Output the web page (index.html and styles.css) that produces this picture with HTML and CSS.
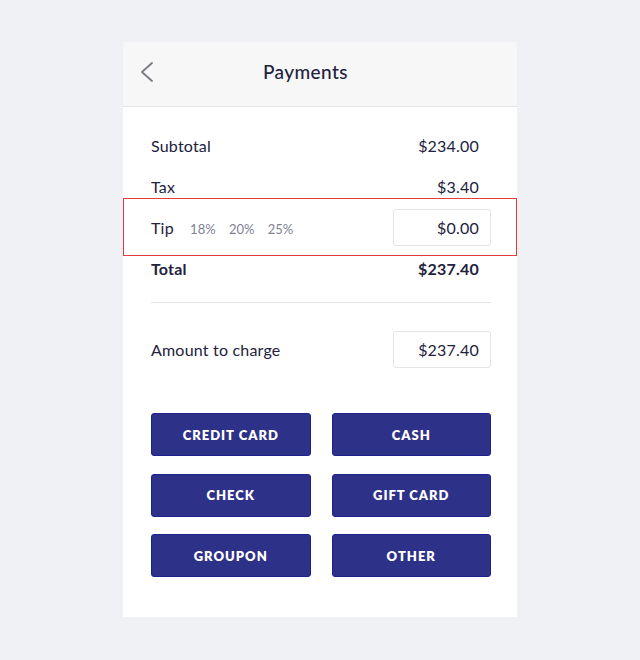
FILE: index.html
```html
<!DOCTYPE html>
<html lang="en">
<head>
    <meta charset="UTF-8">
    <meta name="viewport" content="width=device-width, initial-scale=1.0">
    <title>Payments</title>
    <link rel="stylesheet" href="styles.css">
</head>
<body>
    <div class="card">
        <div class="header">
            <svg class="back" width="14" height="20" viewBox="0 0 14 20">
                <path d="M12 1 L2 10 L12 19" fill="none" stroke="#7a7a85" stroke-width="1.8" stroke-linecap="round" stroke-linejoin="round"/>
            </svg>
            <h1 class="title">Payments</h1>
        </div>

        <div class="content">
            <div class="row">
                <span>Subtotal</span>
                <span class="value">$234.00</span>
            </div>
            <div class="row">
                <span>Tax</span>
                <span class="value">$3.40</span>
            </div>
            <div class="row tip-row">
                <span class="tip-label">
                    Tip
                    <span class="pct">18%</span>
                    <span class="pct">20%</span>
                    <span class="pct">25%</span>
                </span>
                <input class="money" type="text" value="$0.00">
            </div>
            <div class="row total">
                <span>Total</span>
                <span class="value">$237.40</span>
            </div>

            <hr class="divider">

            <div class="row charge">
                <span>Amount to charge</span>
                <input class="money" type="text" value="$237.40">
            </div>

            <div class="methods">
                <button>CREDIT CARD</button>
                <button>CASH</button>
                <button>CHECK</button>
                <button>GIFT CARD</button>
                <button>GROUPON</button>
                <button>OTHER</button>
            </div>
        </div>
    </div>
</body>
</html>
```

FILE: styles.css
```css
body {
    margin: 0;
    background: #f0f1f5;
    font-family: Lato, "Noto Sans", sans-serif;
    color: #22223d;
}
.card {
    width: 394px;
    height: 575px;
    margin: 42px auto 0;
    background: #fff;
}
.header {
    height: 65px;
    box-sizing: border-box;
    padding: 0 0 5px 17px;
    display: flex;
    align-items: center;
    background: #f7f7f8;
    border-bottom: 1px solid #e6e6ea;
}
.title {
    margin: 0 0 0 109px;
    font-size: 19px;
    font-weight: 500;
    letter-spacing: 0.4px;
}
.content {
    padding: 18px 26px 0 28px;
}
.row {
    height: 41px;
    display: flex;
    align-items: center;
    justify-content: space-between;
    font-size: 16px;
    letter-spacing: 0.2px;
}
.value {
    padding-right: 12px;
}
.tip-row {
    position: relative;
}
.tip-row::after {
    content: "";
    position: absolute;
    top: -9px;
    bottom: -8px;
    left: -28px;
    right: -26px;
    border: 1px solid #e53a3a;
    pointer-events: none;
}
.pct {
    margin-left: 9px;
    font-size: 13px;
    letter-spacing: 0;
    color: #7f7f96;
}
.tip-label .pct:nth-of-type(1) {
    margin-left: 12px;
}
.money {
    width: 98px;
    height: 37px;
    box-sizing: border-box;
    padding: 0 11px;
    border: 1px solid #e3e3e8;
    border-radius: 3px;
    text-align: right;
    font-family: inherit;
    font-size: 16px;
    letter-spacing: 0.2px;
    color: #22223d;
}
.total {
    font-weight: 700;
}
.divider {
    margin: 13px 0 0;
    border: none;
    border-top: 1px solid #e3e3e8;
}
.charge {
    height: 37px;
    margin-top: 28px;
}
.methods {
    margin-top: 45px;
    display: grid;
    grid-template-columns: 1fr 1fr;
    gap: 17.5px 21px;
}
.methods button {
    height: 43px;
    background: #2e3188;
    border: 1px solid #1d2190;
    border-radius: 3px;
    color: #fff;
    font-family: inherit;
    font-size: 13px;
    font-weight: 800;
    letter-spacing: 1px;
    cursor: pointer;
}
```
